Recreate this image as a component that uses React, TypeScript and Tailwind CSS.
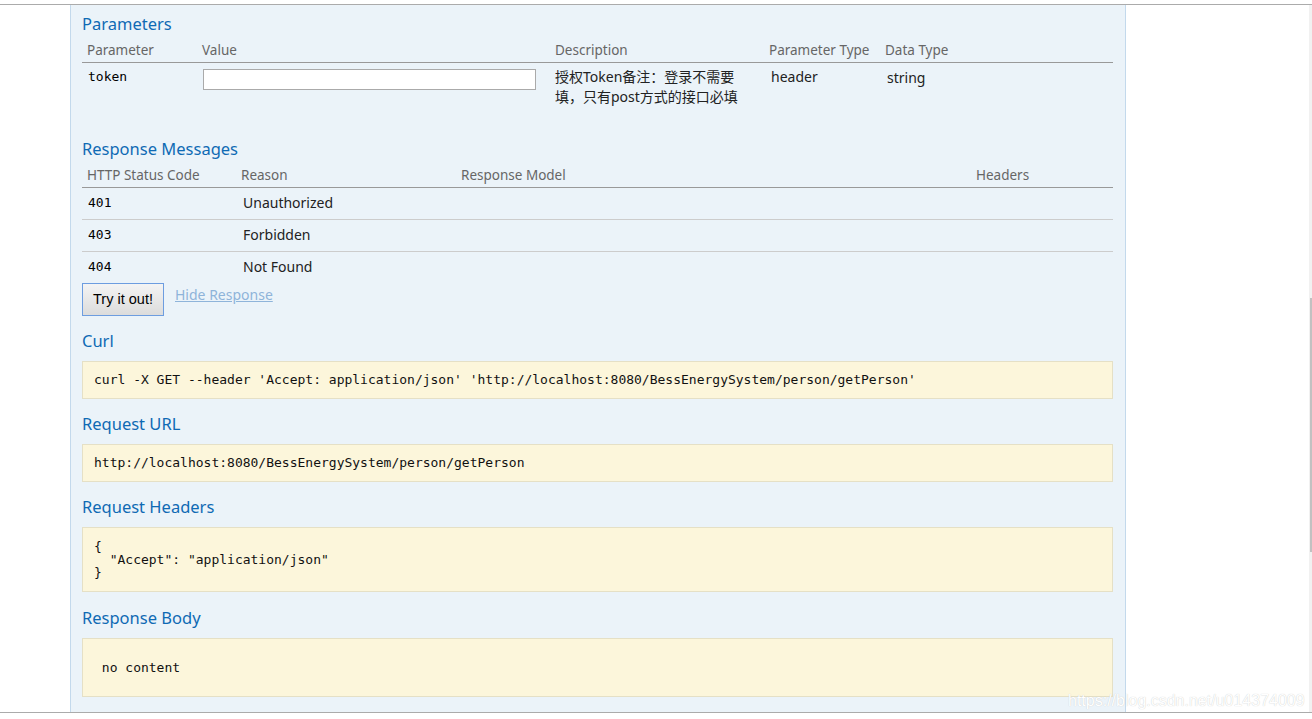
import React from "react";

const sans = "font-['Noto_Sans','Noto_Sans_CJK_SC',sans-serif]";
const mono = "font-['DejaVu_Sans_Mono',monospace]";

function Heading({ children }: { children: React.ReactNode }) {
  return <h4 className={`h-[22px] text-[16.5px] leading-[22px] text-[#0f6ab4] ${sans}`}>{children}</h4>;
}

function CodeBox({ children, className = "" }: { children: React.ReactNode; className?: string }) {
  return (
    <pre
      className={`mt-[9px] border border-[#e5e0c6] bg-[#fcf6db] px-[11px] text-[13px] text-[#111] ${mono} ${className}`}
    >
      {children}
    </pre>
  );
}

const responses = [
  { code: "401", reason: "Unauthorized" },
  { code: "403", reason: "Forbidden" },
  { code: "404", reason: "Not Found" },
];

export default function App() {
  return (
    <div className={`relative flex h-[719px] w-[1312px] flex-col overflow-hidden bg-white ${sans}`}>
      <div className="h-[4px]" />
      <div className="h-px bg-[#ababab]" />

      <div className="flex h-[707px]">
        <div className="w-[70px]" />

        {/* Operation content panel */}
        <div className="w-[1056px] border-x border-[#c3d9ec] bg-[#ebf3f9] pl-[11px] pr-[12px] pt-[8px]">
          <Heading>Parameters</Heading>

          <div className="grid grid-cols-[115px_353px_214px_117px_232px] text-[13.5px] text-[#666]">
            <div className="col-span-5 grid grid-cols-subgrid h-[28px] items-end border-b border-[#999] pb-[3px] leading-[18px]">
              <span className="pl-[5px]">Parameter</span>
              <span className="pl-[5px]">Value</span>
              <span className="pl-[5px]">Description</span>
              <span className="pl-[5px]">Parameter Type</span>
              <span className="pl-[4px]">Data Type</span>
            </div>
            <div className="col-span-5 grid grid-cols-subgrid items-start pt-[4px] pb-[6px] leading-[20px]">
              <span className={`pl-[6px] text-[13px] text-black ${mono}`}>token</span>
              <div className="pl-[6px] pt-[2px]">
                <input className="block h-[21px] w-[333px] border border-[#aaa] bg-white" />
              </div>
              <span className="pl-[5px] pr-[20px] text-[14px] text-[#222]">授权Token备注：登录不需要填，只有post方式的接口必填</span>
              <span className="pl-[7px] text-[14px] text-[#222]">header</span>
              <span className="pl-[6px] text-[14px] leading-[22px] text-[#222]">string</span>
            </div>
          </div>

          <div className="mt-[25px]">
            <Heading>Response Messages</Heading>
          </div>

          <div className="grid grid-cols-[154px_220px_515px_142px] text-[13.5px] text-[#666]">
            <div className="col-span-4 grid grid-cols-subgrid h-[28px] items-end border-b border-[#999] pb-[3px] leading-[18px]">
              <span className="pl-[5px]">HTTP Status Code</span>
              <span className="pl-[5px]">Reason</span>
              <span className="pl-[5px]">Response Model</span>
              <span className="pl-[5px]">Headers</span>
            </div>
            {responses.map((r, i) => (
              <div
                key={r.code}
                className={`col-span-4 grid grid-cols-subgrid items-center pb-[2px] ${i > 0 ? "h-[32px] border-t border-[#ccc]" : "h-[31px]"}`}
              >
                <span className={`pl-[6px] text-[13px] text-black ${mono}`}>{r.code}</span>
                <span className="pl-[7px] text-[14px] text-[#222]">{r.reason}</span>
                <span />
                <span />
              </div>
            ))}
          </div>

          <div className="flex items-start gap-[11px]">
            <button className="h-[33px] w-[82px] border border-[#6d9de0] bg-gradient-to-b from-[#f4f4f4] to-[#dcdcdc] font-['Liberation_Sans',sans-serif] text-[14.5px] text-black">
              Try it out!
            </button>
            <a className="pt-[2px] text-[14px] leading-[20px] text-[#8fb4da] underline">Hide Response</a>
          </div>

          <div className="mt-[14px]">
            <Heading>Curl</Heading>
          </div>
          <CodeBox className="h-[38px] leading-[36px]">
            curl -X GET --header 'Accept: application/json' 'http://localhost:8080/BessEnergySystem/person/getPerson'
          </CodeBox>

          <div className="mt-[14px]">
            <Heading>Request URL</Heading>
          </div>
          <CodeBox className="h-[38px] leading-[36px]">http://localhost:8080/BessEnergySystem/person/getPerson</CodeBox>

          <div className="mt-[14px]">
            <Heading>Request Headers</Heading>
          </div>
          <CodeBox className="h-[65px] pt-[12px] leading-[13px]">{`{\n  "Accept": "application/json"\n}`}</CodeBox>

          <div className="mt-[15px]">
            <Heading>Response Body</Heading>
          </div>
          <CodeBox className="h-[59px] leading-[57px]">{" no content"}</CodeBox>
        </div>

        <div className="flex-1" />

        {/* Page scrollbar */}
        <div className="w-[3px] bg-[#f1f1f1]">
          <div className="ml-px mt-[293px] h-[254px] w-[2px] bg-[#c1c1c1]" />
        </div>
      </div>

      <div className="h-px bg-[#ababab]" />
      <div className="flex-1" />

      <span className="absolute left-[1068px] top-[689px] font-['Liberation_Sans',sans-serif] text-[16px] text-white [text-shadow:0_0_1px_#c0c0c0]">
        https://blog.csdn.net/u014374009
      </span>
    </div>
  );
}
